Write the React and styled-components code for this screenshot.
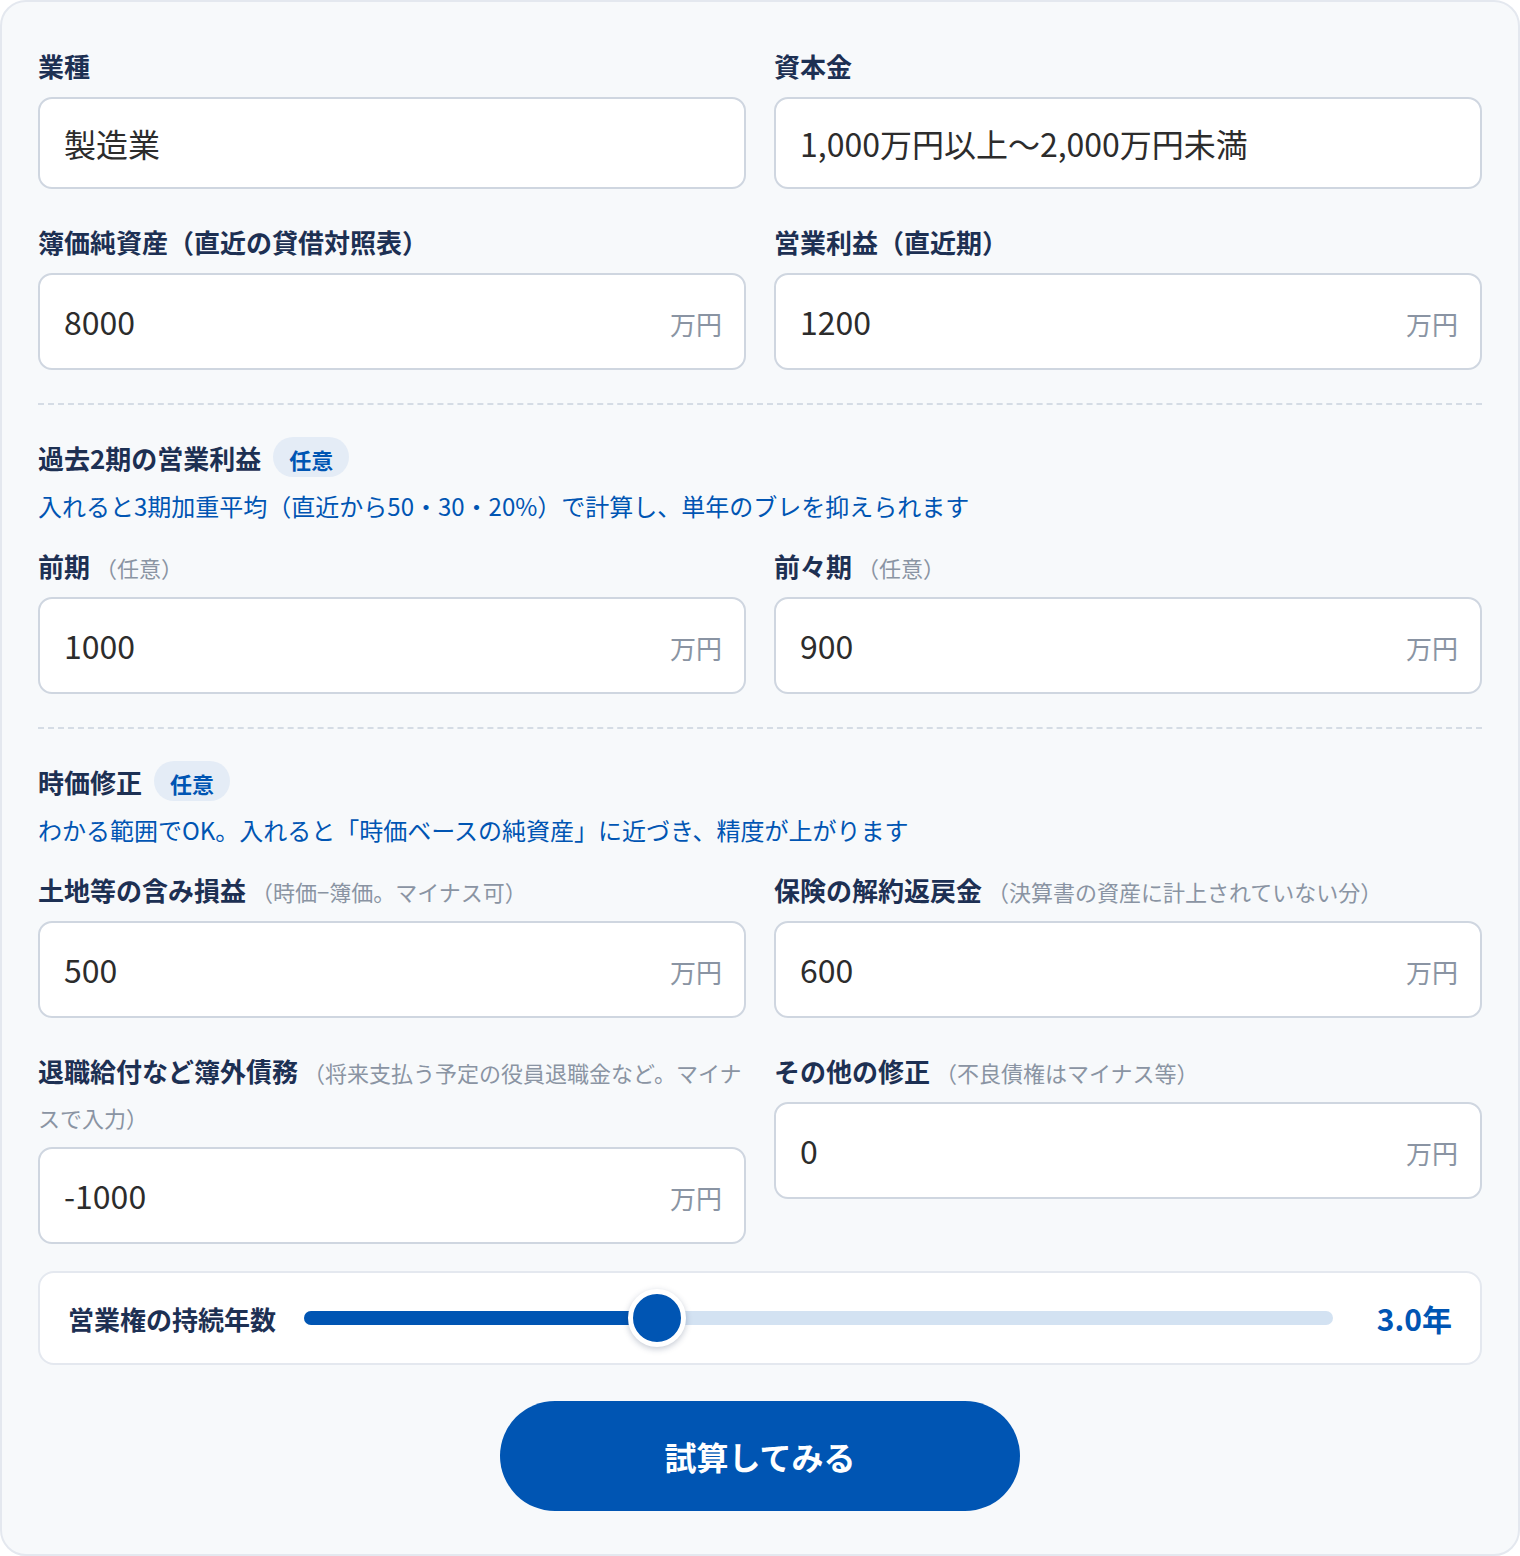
import React, { useState } from "react";
import styled, { createGlobalStyle } from "styled-components";

const GlobalStyle = createGlobalStyle`
  * { box-sizing: border-box; }
  body {
    margin: 0;
    background: #ffffff;
    font-family: "Noto Sans CJK JP", "Noto Sans", sans-serif;
  }
`;

const Field = ({ label, hint, value, unit = "万円" }) => (
  <FieldBox>
    <Label>
      {label}
      {hint ? <Hint>{hint}</Hint> : null}
    </Label>
    <NumberBox>
      <Value>{value}</Value>
      <Unit>{unit}</Unit>
    </NumberBox>
  </FieldBox>
);

const SectionHead = ({ title, note }) => (
  <SectionBox>
    <TitleRow>
      <Title>{title}</Title>
      <Badge>任意</Badge>
    </TitleRow>
    <Note>{note}</Note>
  </SectionBox>
);

export default function App() {
  const [years] = useState(3);
  const min = 1;
  const max = 7;
  const ratio = (years - min) / (max - min);

  return (
    <>
      <GlobalStyle />
      <Card>
        <Grid>
          <FieldBox>
            <Label>業種</Label>
            <SelectBox>製造業</SelectBox>
          </FieldBox>
          <FieldBox>
            <Label>資本金</Label>
            <SelectBox>1,000万円以上〜2,000万円未満</SelectBox>
          </FieldBox>
          <Field label="簿価純資産（直近の貸借対照表）" value="8000" />
          <Field label="営業利益（直近期）" value="1200" />
        </Grid>

        <Divider />

        <SectionHead
          title="過去2期の営業利益"
          note="入れると3期加重平均（直近から50・30・20%）で計算し、単年のブレを抑えられます"
        />
        <Grid>
          <Field label="前期" hint="（任意）" value="1000" />
          <Field label="前々期" hint="（任意）" value="900" />
        </Grid>

        <Divider />

        <SectionHead
          title="時価修正"
          note="わかる範囲でOK。入れると「時価ベースの純資産」に近づき、精度が上がります"
        />
        <Grid>
          <Field label="土地等の含み損益" hint="（時価−簿価。マイナス可）" value="500" />
          <Field
            label="保険の解約返戻金"
            hint="（決算書の資産に計上されていない分）"
            value="600"
          />
          <Field
            label="退職給付など簿外債務"
            hint="（将来支払う予定の役員退職金など。マイナスで入力）"
            value="-1000"
          />
          <Field label="その他の修正" hint="（不良債権はマイナス等）" value="0" />
        </Grid>

        <SliderCard>
          <SliderLabel>営業権の持続年数</SliderLabel>
          <Track>
            <Fill style={{ width: `calc(29px + (100% - 58px) * ${ratio})` }} />
            <Thumb style={{ left: `calc((100% - 58px) * ${ratio})` }} />
          </Track>
          <SliderValue>{years.toFixed(1)}年</SliderValue>
        </SliderCard>

        <ButtonRow>
          <SubmitButton>試算してみる</SubmitButton>
        </ButtonRow>
      </Card>
    </>
  );
}

const Card = styled.div`
  width: 1520px;
  min-height: 1556px;
  background: #f7f9fb;
  border: 2px solid #e4e8ef;
  border-radius: 26px;
  padding: 41px 36px 40px;
  display: flex;
  flex-direction: column;
`;

const Grid = styled.div`
  display: grid;
  grid-template-columns: 1fr 1fr;
  column-gap: 28px;
  row-gap: 30px;
  align-items: start;
`;

const FieldBox = styled.div`
  display: flex;
  flex-direction: column;
`;

const Label = styled.div`
  font-size: 26px;
  line-height: 45px;
  font-weight: 700;
  color: #1d3053;
  margin-bottom: 9px;
`;

const Hint = styled.span`
  font-size: 22px;
  line-height: 1;
  font-weight: 400;
  color: #8a94a3;
  margin-left: 5px;
`;

const SelectBox = styled.div`
  height: 92px;
  background: #ffffff;
  border: 2px solid #cfd6e0;
  border-radius: 14px;
  padding: 0 24px;
  display: flex;
  align-items: center;
  font-size: 32px;
  color: #2c2c2c;
`;

const NumberBox = styled.div`
  height: 97px;
  background: #ffffff;
  border: 2px solid #cfd6e0;
  border-radius: 14px;
  padding: 0 22px 0 24px;
  display: flex;
  align-items: center;
  justify-content: space-between;
`;

const Value = styled.span`
  font-size: 32px;
  color: #2c2c2c;
  margin-top: -2px;
`;

const Unit = styled.span`
  font-size: 26px;
  color: #8a94a3;
  margin-top: 4px;
`;

const Divider = styled.hr`
  width: 100%;
  margin: 33px 0 32px;
  border: none;
  border-top: 2px dashed #d5dce5;
`;

const SectionBox = styled.div`
  display: flex;
  flex-direction: column;
  margin-bottom: 19px;
`;

const TitleRow = styled.div`
  display: flex;
  align-items: center;
  gap: 12px;
  height: 40px;
`;

const Title = styled.div`
  font-size: 26px;
  font-weight: 700;
  color: #1d3053;
`;

const Badge = styled.span`
  height: 40px;
  padding: 0 16px;
  border-radius: 20px;
  background: #e4ecf6;
  color: #0055b3;
  font-size: 22px;
  font-weight: 700;
  display: flex;
  align-items: center;
  padding-top: 4px;
`;

const Note = styled.div`
  font-size: 24px;
  line-height: 36px;
  color: #0055b3;
  margin-top: 11px;
`;

const SliderCard = styled.div`
  margin-top: 27px;
  height: 94px;
  background: #ffffff;
  border: 2px solid #e4e8ef;
  border-radius: 16px;
  padding: 0 28px;
  display: flex;
  align-items: center;
  gap: 28px;
`;

const SliderLabel = styled.div`
  font-size: 26px;
  font-weight: 700;
  color: #1d3053;
  white-space: nowrap;
`;

const Track = styled.div`
  position: relative;
  flex: 1;
  height: 14px;
  border-radius: 7px;
  background: #d3e2f2;
  margin-right: 16px;
`;

const Fill = styled.div`
  height: 100%;
  border-radius: 7px;
  background: #0055b3;
`;

const Thumb = styled.div`
  position: absolute;
  top: 50%;
  width: 58px;
  height: 58px;
  margin-top: -29px;
  border-radius: 50%;
  background: #0055b3;
  border: 5px solid #ffffff;
  box-shadow: 0 2px 6px rgba(20, 40, 80, 0.25);
`;

const SliderValue = styled.div`
  font-size: 30px;
  font-weight: 700;
  color: #0055b3;
  white-space: nowrap;
`;

const ButtonRow = styled.div`
  display: flex;
  justify-content: center;
  margin-top: 36px;
`;

const SubmitButton = styled.button`
  width: 520px;
  height: 110px;
  border: none;
  border-radius: 55px;
  background: #0055b3;
  color: #ffffff;
  font-family: inherit;
  font-size: 32px;
  font-weight: 700;
  cursor: pointer;
`;
